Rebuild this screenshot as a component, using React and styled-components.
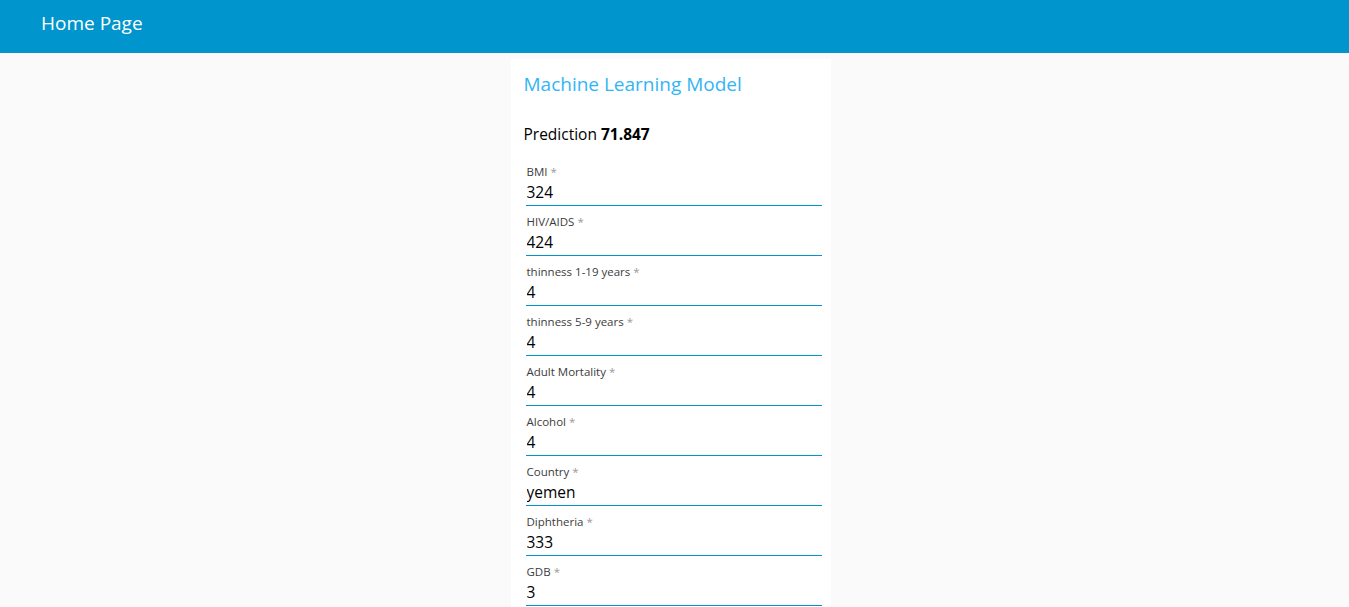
import React from "react";
import styled, { createGlobalStyle } from "styled-components";

const GlobalStyle = createGlobalStyle`
  html, body {
    margin: 0;
    padding: 0;
    height: 100%;
    overflow: hidden;
  }
  body {
    font-family: "Open Sans", "Noto Sans", sans-serif;
    background: #fafafa;
  }
  * { box-sizing: border-box; }
`;

const Page = styled.div`
  display: flex;
  flex-direction: column;
  height: 100vh;
`;

const TopBar = styled.header`
  flex: 0 0 53px;
  display: flex;
  align-items: center;
  padding-left: 41px;
  background: #0095cc;
`;

const TopTitle = styled.h1`
  margin: 0;
  font-size: 19px;
  font-weight: 400;
  color: #ffffff;
  padding-bottom: 7px;
`;

const Main = styled.main`
  flex: 1;
  overflow-y: auto;
  background: #fafafa;
  padding: 6px 8px 30px 0;

  &::-webkit-scrollbar {
    width: 5px;
  }
  &::-webkit-scrollbar-track {
    background: #f0f0f0;
  }
  &::-webkit-scrollbar-thumb {
    background: #c1c1c1;
    border-left: 2px solid #f0f0f0;
  }
`;

const Card = styled.section`
  width: 320px;
  margin: 0 auto;
  background: #ffffff;
  padding: 12px 9px 24px 13px;
`;

const CardTitle = styled.h2`
  margin: 0;
  font-size: 19px;
  font-weight: 400;
  line-height: 27px;
  color: #33b5f5;
`;

const Prediction = styled.p`
  margin: 25px 0 0;
  font-size: 15.5px;
  line-height: 23px;
  color: #000;

  b {
    font-weight: 700;
  }
`;

const Form = styled.form`
  margin-top: 18px;
  padding-left: 2px;
  display: flex;
  flex-direction: column;
`;

const Field = styled.label`
  display: flex;
  flex-direction: column;
  width: 296px;
  margin-bottom: 8px;
`;

const LabelText = styled.span`
  font-size: 11.5px;
  line-height: 16px;
  color: #3c3c3c;
  padding-left: 1px;
`;

const Req = styled.span`
  color: #9a9a9a;
  margin-left: 3px;
`;

const Input = styled.input`
  margin-top: 1px;
  height: 25px;
  border: none;
  border-bottom: 1px solid #0095cc;
  outline: none;
  background: transparent;
  padding: 0 1px 2px;
  font-family: inherit;
  font-size: 15.5px;
  color: #000;
`;

const fields = [
  ["BMI", "324"],
  ["HIV/AIDS", "424"],
  ["thinness 1-19 years", "4"],
  ["thinness 5-9 years", "4"],
  ["Adult Mortality", "4"],
  ["Alcohol", "4"],
  ["Country", "yemen"],
  ["Diphtheria", "333"],
  ["GDB", "3"],
  ["Hepatitis B", "3"],
  ["Income composition of resources", "3"],
  ["Measles", "3"],
  ["Polio", "3"],
  ["Population", "3"],
  ["Schooling", "3"],
  ["Status", "developing"],
  ["Total expenditure", "3"],
  ["Year", "2015"],
  ["infant deaths", "3"],
  ["percentage expenditure", "3"],
  ["under-five deaths", "3"],
];

export default function App() {
  return (
    <>
      <GlobalStyle />
      <Page>
        <TopBar>
          <TopTitle>Home Page</TopTitle>
        </TopBar>
        <Main>
          <Card>
            <CardTitle>Machine Learning Model</CardTitle>
            <Prediction>
              Prediction <b>71.847</b>
            </Prediction>
            <Form onSubmit={(e) => e.preventDefault()}>
              {fields.map(([label, value]) => (
                <Field key={label}>
                  <LabelText>
                    {label}
                    <Req>*</Req>
                  </LabelText>
                  <Input defaultValue={value} />
                </Field>
              ))}
            </Form>
          </Card>
        </Main>
      </Page>
    </>
  );
}
